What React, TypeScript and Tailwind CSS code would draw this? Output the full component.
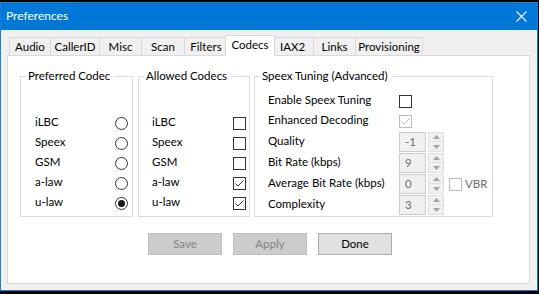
const font = { fontFamily: "Lato, 'Liberation Sans', sans-serif" };

function Radio({ checked }: { checked?: boolean }) {
  return (
    <span className="flex h-[13px] w-[13px] items-center justify-center rounded-full border border-[#333333] bg-white">
      {checked && <span className="h-[7px] w-[7px] rounded-full bg-[#1a1a1a]" />}
    </span>
  );
}

function Check({ checked, disabled }: { checked?: boolean; disabled?: boolean }) {
  const c = disabled ? "#bcbcbc" : "#333333";
  return (
    <span
      className={`flex h-[13px] w-[13px] items-center justify-center border bg-white ${
        disabled ? "border-[#bcbcbc]" : "border-[#333333]"
      }`}
    >
      {checked && (
        <svg width="11" height="11" viewBox="0 0 11 11">
          <path d="M1.5 5.5 L4 8 L9.5 2.5" fill="none" stroke={c} strokeWidth="1" />
        </svg>
      )}
    </span>
  );
}

function Spin({ value }: { value: string }) {
  return (
    <div className="flex h-[20px] items-center">
      <div className="flex h-[20px] w-[27px] items-center border border-[#cccccc] bg-[#f0f0f0] pl-[5px] text-[#6d6d6d]">
        {value}
      </div>
      <div className="ml-[2px] flex h-[20px] w-[16px] flex-col border border-[#e0e0e0] bg-[#f0f0f0]">
        <div className="flex h-[9px] items-center justify-center border-b border-[#e0e0e0]">
          <svg width="7" height="4" viewBox="0 0 7 4">
            <path d="M0 4 L3.5 0 L7 4 Z" fill="#a3a3a3" />
          </svg>
        </div>
        <div className="flex flex-1 items-center justify-center">
          <svg width="7" height="4" viewBox="0 0 7 4">
            <path d="M0 0 L3.5 4 L7 0 Z" fill="#a3a3a3" />
          </svg>
        </div>
      </div>
    </div>
  );
}

function Group({ title, width, children }: { title: string; width: string; children: React.ReactNode }) {
  return (
    <fieldset className={`h-[149px] ${width} border border-[#dcdcdc]`}>
      <legend className="ml-[5px] pl-[2px] pr-[4px] leading-[16px]">{title}</legend>
      {children}
    </fieldset>
  );
}

const codecs = ["iLBC", "Speex", "GSM", "a-law", "u-law"];
const tabs = [
  { name: "Audio", w: "w-[42px]" },
  { name: "CallerID", w: "w-[50px]" },
  { name: "Misc", w: "w-[43px]" },
  { name: "Scan", w: "w-[44px]" },
  { name: "Filters", w: "w-[44px]" },
  { name: "Codecs", w: "w-[50px]", active: true },
  { name: "IAX2", w: "w-[43px]" },
  { name: "Links", w: "w-[43px]" },
  { name: "Provisioning", w: "w-[68px]" },
];

export default function App() {
  return (
    <div className="h-[294px] w-[539px] bg-black pt-[2px] text-[11.5px] text-black" style={font}>
      <div className="flex h-[289px] w-[538px] flex-col border border-[#1a7fd6] bg-[#f0f0f0]">
        <div className="flex h-[27px] items-center justify-between bg-[#0078d7] pl-[5px] pr-[10px] text-[12px] text-white">
          <span className="pb-[1px]">Preferences</span>
          <svg width="11" height="11" viewBox="0 0 11 11">
            <path d="M0.5 0.5 L10.5 10.5 M10.5 0.5 L0.5 10.5" stroke="white" strokeWidth="1.1" />
          </svg>
        </div>

        <div className="ml-[6px] mt-[5px] flex h-[20px] items-end pl-[2px]">
          {tabs.map((t) =>
            t.active ? (
              <div
                key={t.name}
                className={`relative z-10 -mx-[3px] -mb-px flex h-[21px] ${t.w} items-center justify-center border-x border-t border-[#d9d9d9] bg-white pb-[3px]`}
              >
                {t.name}
              </div>
            ) : (
              <div
                key={t.name}
                className={`-ml-px flex h-[18px] ${t.w} items-center justify-center border-x border-t border-[#d9d9d9] bg-[#f0f0f0] first:ml-0`}
              >
                {t.name}
              </div>
            )
          )}
        </div>

        <div className="ml-[6px] flex h-[229px] w-[523px] flex-col border border-[#d9d9d9] bg-white">
          <div className="ml-[12px] mt-[12px] flex gap-[5px]">
            <Group title="Preferred Codec" width="w-[113px]">
              <div className="flex flex-col pt-[29px]">
                {codecs.map((c) => (
                  <div key={c} className="flex h-[20px] items-center justify-between pl-[14px] pr-[4px]">
                    <span className="pb-[3px]">{c}</span>
                    <Radio checked={c === "u-law"} />
                  </div>
                ))}
              </div>
            </Group>
            <Group title="Allowed Codecs" width="w-[112px]">
              <div className="flex flex-col pt-[29px]">
                {codecs.map((c) => (
                  <div key={c} className="flex h-[20px] items-center justify-between pl-[13px] pr-[3px]">
                    <span className="pb-[3px]">{c}</span>
                    <Check checked={c === "a-law" || c === "u-law"} />
                  </div>
                ))}
              </div>
            </Group>
            <div className="-ml-px">
              <Group title="Speex Tuning (Advanced)" width="w-[239px]">
                <div className="flex flex-col pl-[13px] pt-[7px]">
                  <div className="flex h-[20px] items-center">
                    <span className="w-[131px] pb-[3px]">Enable Speex Tuning</span>
                    <Check />
                  </div>
                  <div className="flex h-[20px] items-center">
                    <span className="w-[131px] pb-[3px]">Enhanced Decoding</span>
                    <Check checked disabled />
                  </div>
                  <div className="mt-[1px] flex flex-col gap-[1px]">
                    <div className="flex h-[20px] items-center">
                      <span className="w-[131px] pb-[3px]">Quality</span>
                      <Spin value="-1" />
                    </div>
                    <div className="flex h-[20px] items-center">
                      <span className="w-[131px] pb-[3px]">Bit Rate (kbps)</span>
                      <Spin value="9" />
                    </div>
                    <div className="flex h-[20px] items-center">
                      <span className="w-[131px] pb-[3px]">Average Bit Rate (kbps)</span>
                      <Spin value="0" />
                      <span className="ml-[5px]">
                        <Check disabled />
                      </span>
                      <span className="ml-[3px] text-[#6d6d6d]">VBR</span>
                    </div>
                    <div className="flex h-[20px] items-center">
                      <span className="w-[131px] pb-[3px]">Complexity</span>
                      <Spin value="3" />
                    </div>
                  </div>
                </div>
              </Group>
            </div>
          </div>

          <div className="mt-[16px] flex gap-[11px] pl-[140px]">
            <button className="h-[22px] w-[74px] border border-[#bfbfbf] bg-[#cccccc] text-[#838383]">Save</button>
            <button className="h-[22px] w-[74px] border border-[#bfbfbf] bg-[#cccccc] text-[#838383]">Apply</button>
            <button className="h-[22px] w-[74px] border border-[#adadad] bg-[#e1e1e1]">Done</button>
          </div>
        </div>
      </div>
    </div>
  );
}
